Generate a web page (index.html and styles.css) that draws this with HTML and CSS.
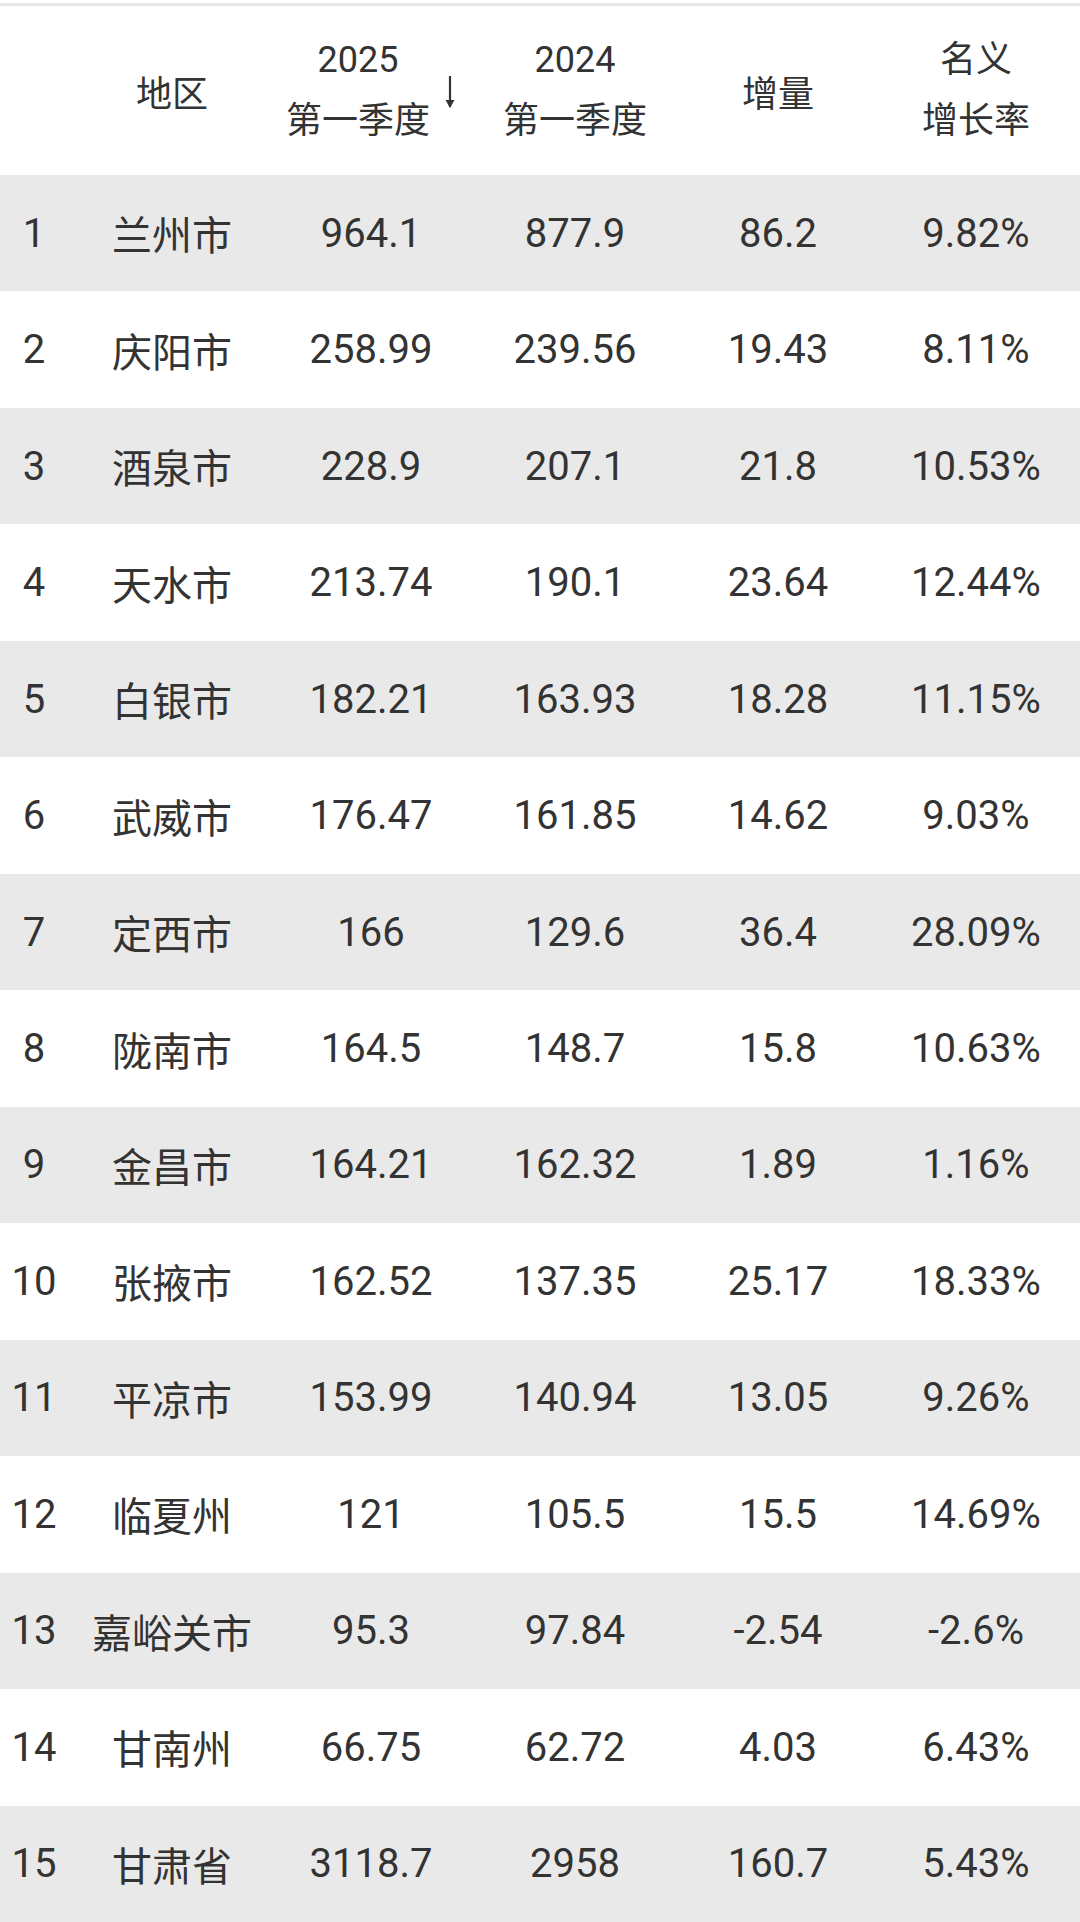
FILE: index.html
```html
<!DOCTYPE html>
<html lang="zh-CN">
<head>
<meta charset="utf-8">
<title>甘肃各市州2025年第一季度GDP</title>
<link rel="stylesheet" href="styles.css">
</head>
<body>
<div class="top-line"></div>
<div class="table">
  <div class="row head">
    <div class="cell"></div>
    <div class="cell">地区</div>
    <div class="cell sorted"><span class="two">2025<br>第一季度</span><svg class="arrow" viewBox="0 0 12 34" width="12" height="34"><path d="M6 1 V32" stroke="#333" stroke-width="2.2" fill="none"/><path d="M1.5 25 L6 33 L10.5 25 Z" fill="#333"/></svg></div>
    <div class="cell"><span class="two">2024<br>第一季度</span></div>
    <div class="cell">增量</div>
    <div class="cell"><span class="two">名义<br>增长率</span></div>
  </div>
  <div class="row odd"><div class="cell">1</div><div class="cell">兰州市</div><div class="cell">964.1</div><div class="cell">877.9</div><div class="cell">86.2</div><div class="cell">9.82%</div></div>
  <div class="row"><div class="cell">2</div><div class="cell">庆阳市</div><div class="cell">258.99</div><div class="cell">239.56</div><div class="cell">19.43</div><div class="cell">8.11%</div></div>
  <div class="row odd"><div class="cell">3</div><div class="cell">酒泉市</div><div class="cell">228.9</div><div class="cell">207.1</div><div class="cell">21.8</div><div class="cell">10.53%</div></div>
  <div class="row"><div class="cell">4</div><div class="cell">天水市</div><div class="cell">213.74</div><div class="cell">190.1</div><div class="cell">23.64</div><div class="cell">12.44%</div></div>
  <div class="row odd"><div class="cell">5</div><div class="cell">白银市</div><div class="cell">182.21</div><div class="cell">163.93</div><div class="cell">18.28</div><div class="cell">11.15%</div></div>
  <div class="row"><div class="cell">6</div><div class="cell">武威市</div><div class="cell">176.47</div><div class="cell">161.85</div><div class="cell">14.62</div><div class="cell">9.03%</div></div>
  <div class="row odd"><div class="cell">7</div><div class="cell">定西市</div><div class="cell">166</div><div class="cell">129.6</div><div class="cell">36.4</div><div class="cell">28.09%</div></div>
  <div class="row"><div class="cell">8</div><div class="cell">陇南市</div><div class="cell">164.5</div><div class="cell">148.7</div><div class="cell">15.8</div><div class="cell">10.63%</div></div>
  <div class="row odd"><div class="cell">9</div><div class="cell">金昌市</div><div class="cell">164.21</div><div class="cell">162.32</div><div class="cell">1.89</div><div class="cell">1.16%</div></div>
  <div class="row"><div class="cell">10</div><div class="cell">张掖市</div><div class="cell">162.52</div><div class="cell">137.35</div><div class="cell">25.17</div><div class="cell">18.33%</div></div>
  <div class="row odd"><div class="cell">11</div><div class="cell">平凉市</div><div class="cell">153.99</div><div class="cell">140.94</div><div class="cell">13.05</div><div class="cell">9.26%</div></div>
  <div class="row"><div class="cell">12</div><div class="cell">临夏州</div><div class="cell">121</div><div class="cell">105.5</div><div class="cell">15.5</div><div class="cell">14.69%</div></div>
  <div class="row odd"><div class="cell">13</div><div class="cell">嘉峪关市</div><div class="cell">95.3</div><div class="cell">97.84</div><div class="cell">-2.54</div><div class="cell">-2.6%</div></div>
  <div class="row"><div class="cell">14</div><div class="cell">甘南州</div><div class="cell">66.75</div><div class="cell">62.72</div><div class="cell">4.03</div><div class="cell">6.43%</div></div>
  <div class="row odd"><div class="cell">15</div><div class="cell">甘肃省</div><div class="cell">3118.7</div><div class="cell">2958</div><div class="cell">160.7</div><div class="cell">5.43%</div></div>
</div>
</body>
</html>
```
FILE: styles.css
```css
html, body {
  margin: 0;
  padding: 0;
  background: #ffffff;
}
body {
  width: 1080px;
  height: 1922px;
  overflow: hidden;
  font-family: Roboto, "Noto Sans CJK SC", "Noto Sans", sans-serif;
  color: #333333;
}
.top-line {
  margin-top: 3px;
  height: 3px;
  background: #e6e6e6;
}
.table {
  display: flex;
  flex-direction: column;
}
.row {
  display: grid;
  grid-template-columns: 68px 208px 190px 218px 188px 208px;
  height: 116.47px;
  font-size: 40px;
}
.row.odd {
  background: #e9e9e9;
}
.row.head {
  height: 169px;
  font-size: 36px;
}
.cell {
  display: flex;
  align-items: center;
  justify-content: center;
  text-align: center;
  white-space: nowrap;
}
.two {
  display: block;
  line-height: 61px;
}
.sorted {
  gap: 14px;
}
.arrow {
  display: block;
  margin-top: 2px;
}
```
